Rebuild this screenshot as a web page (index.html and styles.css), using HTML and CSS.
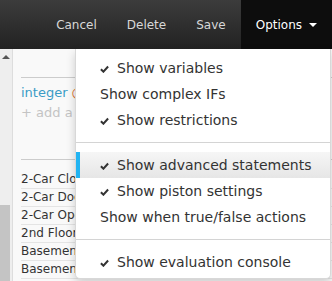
FILE: index.html
```html
<!DOCTYPE html>
<html lang="en">
<head>
<meta charset="UTF-8">
<meta name="viewport" content="width=device-width, initial-scale=1.0">
<title>Piston editor</title>
<link rel="stylesheet" href="styles.css">
</head>
<body>
<div class="navbar">
  <a class="nav-link">Cancel</a>
  <a class="nav-link">Delete</a>
  <a class="nav-link">Save</a>
  <div class="nav-options">Options <span class="caret"></span></div>
</div>

<div class="main">
  <div class="rail">
    <span class="rail-arrow"></span>
    <div class="rail-thumb"></div>
  </div>
  <div class="content">
    <div class="variable-block">
      <div class="variable"><span class="var-type">integer</span> <span class="var-at">@</span></div>
      <div class="add-var">+ add a new</div>
    </div>
    <ul class="device-list">
      <li>2-Car Closet Light</li>
      <li>2-Car Door</li>
      <li>2-Car Opener</li>
      <li>2nd Floor Hall</li>
      <li>Basement Lights</li>
      <li>Basement Stairs</li>
    </ul>
  </div>
</div>

<ul class="dropdown-menu">
  <li class="menu-item"><svg class="check" viewBox="0 0 10 8"><path d="M1 4.2 L3.8 7 L9 1.2"/></svg>Show variables</li>
  <li class="menu-item">Show complex IFs</li>
  <li class="menu-item"><svg class="check" viewBox="0 0 10 8"><path d="M1 4.2 L3.8 7 L9 1.2"/></svg>Show restrictions</li>
  <li class="divider"></li>
  <li class="menu-item active"><svg class="check" viewBox="0 0 10 8"><path d="M1 4.2 L3.8 7 L9 1.2"/></svg>Show advanced statements</li>
  <li class="menu-item"><svg class="check" viewBox="0 0 10 8"><path d="M1 4.2 L3.8 7 L9 1.2"/></svg>Show piston settings</li>
  <li class="menu-item">Show when true/false actions</li>
  <li class="divider"></li>
  <li class="menu-item"><svg class="check" viewBox="0 0 10 8"><path d="M1 4.2 L3.8 7 L9 1.2"/></svg>Show evaluation console</li>
</ul>
</body>
</html>
```

FILE: styles.css
```css
body {
  margin: 0;
  font-family: 'DejaVu Sans', Verdana, sans-serif;
  background-color: #f9f9f9;
  height: 281px;
  overflow: hidden;
}

.navbar {
  height: 49px;
  display: flex;
  justify-content: flex-end;
  align-items: stretch;
  background: linear-gradient(to bottom, #3c3c3c, #222);
  font-size: 12px;
}

.nav-link {
  display: flex;
  align-items: center;
  padding: 0 15px;
  color: #d8d8d8;
}

.nav-options {
  display: flex;
  align-items: center;
  padding: 0 15px;
  background-color: #0d0d0d;
  color: #fff;
}

.caret {
  display: inline-block;
  margin-left: 7px;
  margin-top: 1px;
  border-top: 4px solid #fff;
  border-left: 4px solid transparent;
  border-right: 4px solid transparent;
}

.main {
  display: flex;
  height: 232px;
}

.rail {
  width: 12px;
  background-color: #eee;
  border-right: 1px solid #ddd;
  display: flex;
  flex-direction: column;
  justify-content: space-between;
}

.rail-arrow {
  margin: 6px 0 0 2px;
  width: 0;
  border-bottom: 4px solid #555;
  border-left: 4px solid transparent;
  border-right: 4px solid transparent;
}

.rail-thumb {
  width: 10px;
  height: 76px;
  background-color: #c4c4c4;
}

.content {
  flex: 1;
  padding: 28px 0 0 8px;
  font-size: 12px;
}

.variable-block {
  border-top: 1px solid #ccc;
  border-bottom: 1px solid #ccc;
  height: 83px;
  padding-top: 7px;
  box-sizing: border-box;
}

.var-type {
  color: #3a9cc6;
  font-size: 13px;
}

.var-at {
  color: #e0783a;
  font-size: 13px;
}

.add-var {
  margin-top: 5px;
  color: #c4c4c4;
  font-size: 13px;
  white-space: nowrap;
}

.device-list {
  list-style: none;
  margin: 11px 0 0;
  padding: 0;
  color: #333;
}

.device-list li {
  height: 17px;
  line-height: 17px;
  border-bottom: 1px solid #e4e4e4;
  white-space: nowrap;
}

.dropdown-menu {
  position: absolute;
  top: 49px;
  left: 75px;
  right: 1px;
  margin: 0;
  padding: 6px 0 3px;
  list-style: none;
  background-color: #fff;
  border: 1px solid #d8d8d8;
  border-top: none;
  border-radius: 0 0 5px 5px;
  box-shadow: 0 4px 10px rgba(0, 0, 0, 0.18);
  font-size: 14px;
  color: #333;
}

.menu-item {
  display: flex;
  align-items: center;
  height: 26px;
  padding-left: 24px;
  white-space: nowrap;
}

.menu-item.active {
  background: linear-gradient(to bottom, #f6f6f6, #e6e6e6);
  box-shadow: inset 4px 0 0 #22b4f2;
}

.check {
  width: 9px;
  height: 8px;
  margin: 1px 8px 0 0;
  fill: none;
  stroke: #333;
  stroke-width: 2.2;
}

.divider {
  height: 1px;
  margin: 9px 0;
  background-color: #d4d4d4;
}
```
